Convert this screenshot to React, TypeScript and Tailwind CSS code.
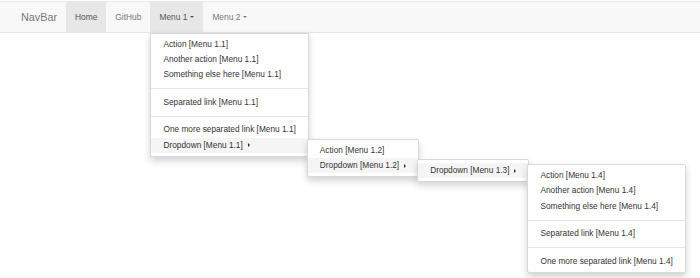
type Entry = { label: string; sub?: Entry[]; open?: boolean } | "divider";

const font = { fontFamily: '"Liberation Sans", Arial, sans-serif' };

const DownCaret = () => (
  <span className="ml-[3px] inline-block align-middle border-t-[2.6px] border-x-[2.6px] border-x-transparent border-t-current" />
);

const RightCaret = () => (
  <span className="ml-[5px] inline-block align-middle border-l-[2.6px] border-y-[2.6px] border-y-transparent border-l-[#333]" />
);

const Menu = ({ items, className }: { items: Entry[]; className: string }) => (
  <ul
    className={`absolute z-10 whitespace-nowrap bg-white border border-black/15 py-[3px] shadow-[0_3.6px_7.2px_rgba(0,0,0,0.175)] ${className}`}
  >
    {items.map((it, i) =>
      it === "divider" ? (
        <li key={i} className="my-[5.5px] h-px bg-[#e5e5e5]" />
      ) : (
        <li key={i} className="relative">
          <span
            className={`block px-3 text-[8.3px] leading-[15.4px] text-[#333] ${
              it.open ? "bg-[#f5f5f5]" : ""
            }`}
          >
            {it.label}
            {it.sub && <RightCaret />}
          </span>
          {it.sub && it.open && (
            <Menu items={it.sub} className="left-full top-[1px] -ml-px rounded-[2.4px]" />
          )}
        </li>
      )
    )}
  </ul>
);

const menu14: Entry[] = [
  { label: "Action [Menu 1.4]" },
  { label: "Another action [Menu 1.4]" },
  { label: "Something else here [Menu 1.4]" },
  "divider",
  { label: "Separated link [Menu 1.4]" },
  "divider",
  { label: "One more separated link [Menu 1.4]" },
];

const menu13: Entry[] = [{ label: "Dropdown [Menu 1.3]", sub: menu14, open: true }];

const menu12: Entry[] = [
  { label: "Action [Menu 1.2]" },
  { label: "Dropdown [Menu 1.2]", sub: menu13, open: true },
];

const menu11: Entry[] = [
  { label: "Action [Menu 1.1]" },
  { label: "Another action [Menu 1.1]" },
  { label: "Something else here [Menu 1.1]" },
  "divider",
  { label: "Separated link [Menu 1.1]" },
  "divider",
  { label: "One more separated link [Menu 1.1]" },
  { label: "Dropdown [Menu 1.1]", sub: menu12, open: true },
];

export default function App() {
  return (
    <div className="w-[700px] h-[278px] bg-white overflow-hidden" style={font}>
      <div className="mt-px border-y border-[#e7e7e7] bg-[#f8f8f8]">
        <div className="flex items-center px-3 h-[30px]">
          <span className="px-[9px] text-[10.8px] leading-[31px] text-[#777]">NavBar</span>
          <ul className="flex text-[8.4px] leading-[31px]">
            <li className="px-[9px] bg-[#e7e7e7] text-[#555]">Home</li>
            <li className="px-[9px] text-[#777]">GitHub</li>
            <li className="relative px-[9px] bg-[#e7e7e7] text-[#555]">
              Menu 1
              <DownCaret />
              <Menu items={menu11} className="left-0 top-full rounded-b-[2.4px]" />
            </li>
            <li className="px-[9px] text-[#777]">
              Menu 2
              <DownCaret />
            </li>
          </ul>
        </div>
      </div>
    </div>
  );
}
